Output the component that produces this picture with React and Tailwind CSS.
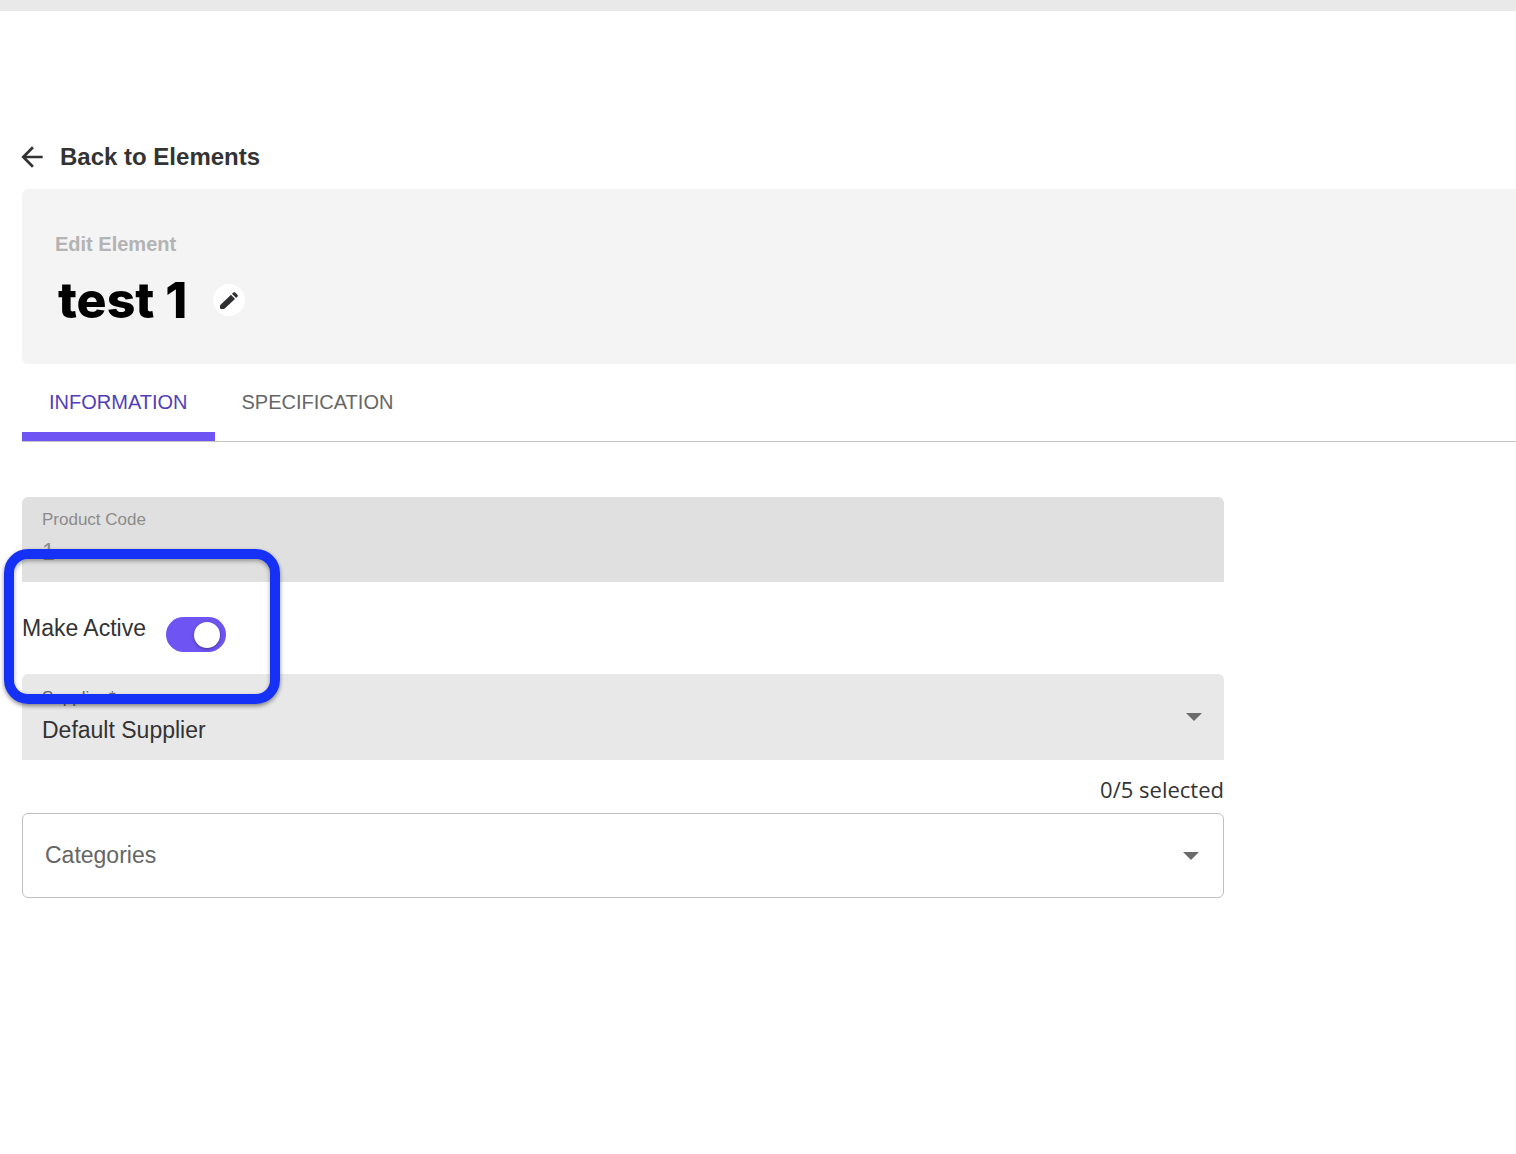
import React, { useState } from 'react'
import { MdArrowBack } from 'react-icons/md'

const TABS = ['INFORMATION', 'SPECIFICATION']

function PencilIcon() {
  return (
    <svg viewBox="0 0 18 17" className="h-[17px] w-[18px]" fill="currentColor" aria-hidden="true">
      <path d="M.6 12.7 11 2.8l4 4.2L4.7 16.6q-.4.4-1 .4H1q-1 0-1-1v-2q0-.8.6-1.3z" />
      <path d="M12 1.8 13.3.6q1-.9 2 0L17.4 2.700q.9 1 0 2L16.100 6z" />
    </svg>
  )
}

function DropdownArrow({ className = 'right-[22px]' }) {
  return (
    <svg
      viewBox="0 0 16 8"
      className={`absolute top-1/2 h-2 w-4 -translate-y-1/2 pointer-events-none ${className}`}
      aria-hidden="true"
    >
      <path d="M0 0h16L8 8z" fill="#6b6b6b" />
    </svg>
  )
}

function Tabs({ active, onChange }) {
  return (
    <div role="tablist" className="flex border-b border-[#c4c4c4]">
      {TABS.map((tab) => (
        <button
          key={tab}
          type="button"
          role="tab"
          aria-selected={active === tab}
          onClick={() => onChange(tab)}
          className={`h-[77px] border-b-9 px-[27px] pt-2 text-xl leading-6 ${
            active === tab
              ? 'border-[#6d54f3] text-[#523ebb]'
              : 'border-transparent text-[#666666]'
          }`}
        >
          {tab}
        </button>
      ))}
    </div>
  )
}

function ActiveSwitch({ checked, onChange }) {
  return (
    <div className="flex h-[92px] items-start gap-5 pt-[35px]">
      <label htmlFor="make-active" className="text-[23px] leading-[22px] text-[#333333]">
        Make Active
      </label>
      <input
        id="make-active"
        type="checkbox"
        role="switch"
        checked={checked}
        onChange={(e) => onChange(e.target.checked)}
        className="flex h-[35px] w-[60px] shrink-0 cursor-pointer appearance-none items-center rounded-full bg-gray-400 px-[6px] before:size-[26px] before:rounded-full before:bg-white before:shadow-[0_1px_3px_rgba(0,0,0,0.4)] before:content-[''] checked:justify-end checked:bg-[#6d54f3]"
      />
    </div>
  )
}

export default function App() {
  const [tab, setTab] = useState('INFORMATION')
  const [active, setActive] = useState(true)

  return (
    <div className="min-h-screen bg-white font-['Liberation_Sans',Arial,sans-serif]">
      <div className="h-[11px] bg-[#e9e9e9]" />

      <main className="pl-[22px] pt-[130px]">
        {/* Header */}
        <a href="#elements" className="flex w-fit items-center gap-3 text-[#333333]">
          <MdArrowBack className="-ml-[6px] size-8" />
          <span className="text-[24px] font-bold leading-8">Back to Elements</span>
        </a>

        <header className="mt-4 flex h-[175px] flex-col rounded-l-md bg-[#f4f4f4] pl-[33px] pt-[43px]">
          <p className="text-xl font-bold leading-6 text-[#b3b3b3]">Edit Element</p>
          <div className="flex items-center gap-[26px] pt-3">
            <h1 className="pl-[3px] font-['Inter',sans-serif] text-[50px] font-extrabold leading-[64px] text-black">
              test 1
            </h1>
            <button
              type="button"
              aria-label="Edit name"
              className="flex size-8 items-center justify-center rounded-full bg-white text-[#2f2f33]"
            >
              <PencilIcon />
            </button>
          </div>
        </header>

        <Tabs active={tab} onChange={setTab} />

        <form className="mt-[55px] max-w-[1202px]">
          {/* Product code */}
          <div className="rounded-t-md bg-[#e0e0e0] px-5 pb-[10px] pt-[11px]">
            <label htmlFor="product-code" className="block text-[17px] leading-6 text-[#8c8c8c]">
              Product Code
            </label>
            <input
              id="product-code"
              type="text"
              value="1"
              disabled
              className="block h-10 w-full bg-transparent text-[23px] text-[#8c8c8c]"
            />
          </div>

          {/* Active toggle with its callout frame */}
          <div className="relative z-10">
            <ActiveSwitch checked={active} onChange={setActive} />
            <div className="pointer-events-none absolute -bottom-[30px] -left-[18px] -top-[33px] w-[276px] rounded-3xl border-10 border-[#1531f5] shadow-[0_2px_4px_rgba(0,0,0,0.45),inset_0_2px_4px_rgba(0,0,0,0.35)]" />
          </div>

          {/* Supplier */}
          <div className="relative rounded-t-md bg-[#e8e8e8] px-5 pb-[10px] pt-3">
            <label htmlFor="supplier" className="block text-[17px] leading-6 text-[#666666]">
              Supplier *
            </label>
            <select
              id="supplier"
              required
              className="block h-10 w-full appearance-none bg-transparent text-[23px] text-[#333333]"
            >
              <option>Default Supplier</option>
            </select>
            <DropdownArrow />
          </div>

          {/* Categories */}
          <p className="pb-2 pt-[13px] text-right font-['Open_Sans',sans-serif] text-[22px] leading-8 text-[#333333]">
            0/5 selected
          </p>
          <div className="relative">
            <select
              aria-label="Categories"
              className="block h-[85px] w-full appearance-none rounded-md border border-[#c0c0c0] bg-white px-[22px] text-[23px] text-[#666666]"
            >
              <option>Categories</option>
            </select>
            <DropdownArrow className="right-[25px]" />
          </div>
        </form>
      </main>
    </div>
  )
}
